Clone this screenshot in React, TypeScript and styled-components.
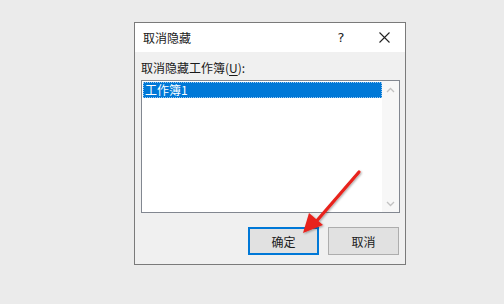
import React from "react";
import styled, { createGlobalStyle } from "styled-components";

const Global = createGlobalStyle`
  html, body { margin: 0; padding: 0; background: #ebebeb; }
  body { width: 504px; height: 304px; overflow: hidden; font-family: "Noto Sans CJK SC", "Microsoft YaHei", sans-serif; }
`;

const Page = styled.div`
  position: relative;
  width: 504px;
  height: 304px;
  padding: 22px 0 0 134px;
  box-sizing: border-box;
`;

const Dialog = styled.div`
  width: 272px;
  height: 243px;
  box-sizing: border-box;
  border: 1px solid #7a7a7a;
  background: #f0f0f0;
  display: flex;
  flex-direction: column;
`;

const TitleBar = styled.div`
  height: 29px;
  background: #ffffff;
  display: flex;
  align-items: center;
  padding-left: 8px;
  font-size: 12px;
  color: #1a1a1a;
`;

const Title = styled.span`
  flex: 1;
  line-height: 16px;
`;

const TitleButton = styled.span<{ $w: number }>`
  width: ${(p) => p.$w}px;
  display: flex;
  justify-content: center;
  align-items: center;
  height: 100%;
  color: #222;
  font-family: "DejaVu Sans", sans-serif;
  font-size: 13px;
`;

const Body = styled.div`
  flex: 1;
  display: flex;
  flex-direction: column;
  padding: 8px 5px 9px 6px;
`;

const Label = styled.div`
  font-size: 12px;
  line-height: 16px;
  color: #1a1a1a;
  u { text-decoration: underline; text-underline-offset: 2px; }
`;

const ListBox = styled.div`
  margin-top: 4px;
  width: 259px;
  height: 133px;
  box-sizing: border-box;
  border: 1px solid #828790;
  background: #ffffff;
  display: flex;
`;

const Items = styled.div`
  flex: 1;
  padding: 1px 0 0 1px;
`;

const Item = styled.div<{ $selected?: boolean }>`
  height: 16px;
  box-sizing: border-box;
  font-size: 12px;
  line-height: 15px;
  padding-left: 2px;
  color: ${(p) => (p.$selected ? "#ffffff" : "#000")};
  background: ${(p) => (p.$selected ? "#0078d7" : "transparent")};
  outline: ${(p) => (p.$selected ? "1px dotted #9cc8f0" : "none")};
  outline-offset: -1px;
`;

const ScrollBar = styled.div`
  width: 17px;
  background: #f7f7f7;
  display: flex;
  flex-direction: column;
  justify-content: space-between;
  align-items: center;
  padding: 6px 0 5px;
`;

const ButtonRow = styled.div`
  margin-top: 14px;
  display: flex;
  justify-content: flex-end;
  gap: 9px;
  padding-right: 1px;
`;

const Button = styled.div<{ $default?: boolean }>`
  width: 71px;
  height: 28px;
  box-sizing: border-box;
  border: ${(p) => (p.$default ? "2px solid #0078d7" : "1px solid #adadad")};
  background: #e1e1e1;
  display: flex;
  align-items: center;
  justify-content: center;
  font-size: 12px;
  color: #1a1a1a;
`;

const ArrowOverlay = styled.svg`
  position: absolute;
  left: 0;
  top: 0;
  pointer-events: none;
`;

const Chevron = ({ up }: { up?: boolean }) => (
  <svg width="9" height="6" viewBox="0 0 9 6">
    <path
      d={up ? "M1 5 L4.5 1.5 L8 5" : "M1 1 L4.5 4.5 L8 1"}
      fill="none"
      stroke="#c2c2c2"
      strokeWidth="1.3"
    />
  </svg>
);

export default function App() {
  return (
    <>
      <Global />
      <Page>
        <Dialog>
          <TitleBar>
            <Title>取消隐藏</Title>
            <TitleButton $w={44}>?</TitleButton>
            <TitleButton $w={42}>
              <svg width="11" height="11" viewBox="0 0 11 11">
                <path d="M0.5 0.5 L10.5 10.5 M10.5 0.5 L0.5 10.5" stroke="#222" strokeWidth="1.1" />
              </svg>
            </TitleButton>
          </TitleBar>
          <Body>
            <Label>
              取消隐藏工作簿(<u>U</u>):
            </Label>
            <ListBox>
              <Items>
                <Item $selected>工作簿1</Item>
              </Items>
              <ScrollBar>
                <Chevron up />
                <Chevron />
              </ScrollBar>
            </ListBox>
            <ButtonRow>
              <Button $default>确定</Button>
              <Button>取消</Button>
            </ButtonRow>
          </Body>
        </Dialog>
        <ArrowOverlay width="504" height="304" viewBox="0 0 504 304">
          <defs>
            <filter id="sh" x="-20%" y="-20%" width="140%" height="140%">
              <feDropShadow dx="1" dy="1" stdDeviation="1" floodColor="#000" floodOpacity="0.35" />
            </filter>
          </defs>
          <g filter="url(#sh)">
            <path d="M359 172 L314 224" stroke="#e8211b" strokeWidth="3.2" strokeLinecap="round" />
            <path d="M303 233 L309 213 L323 225 Z" fill="#e8211b" />
          </g>
        </ArrowOverlay>
      </Page>
    </>
  );
}
